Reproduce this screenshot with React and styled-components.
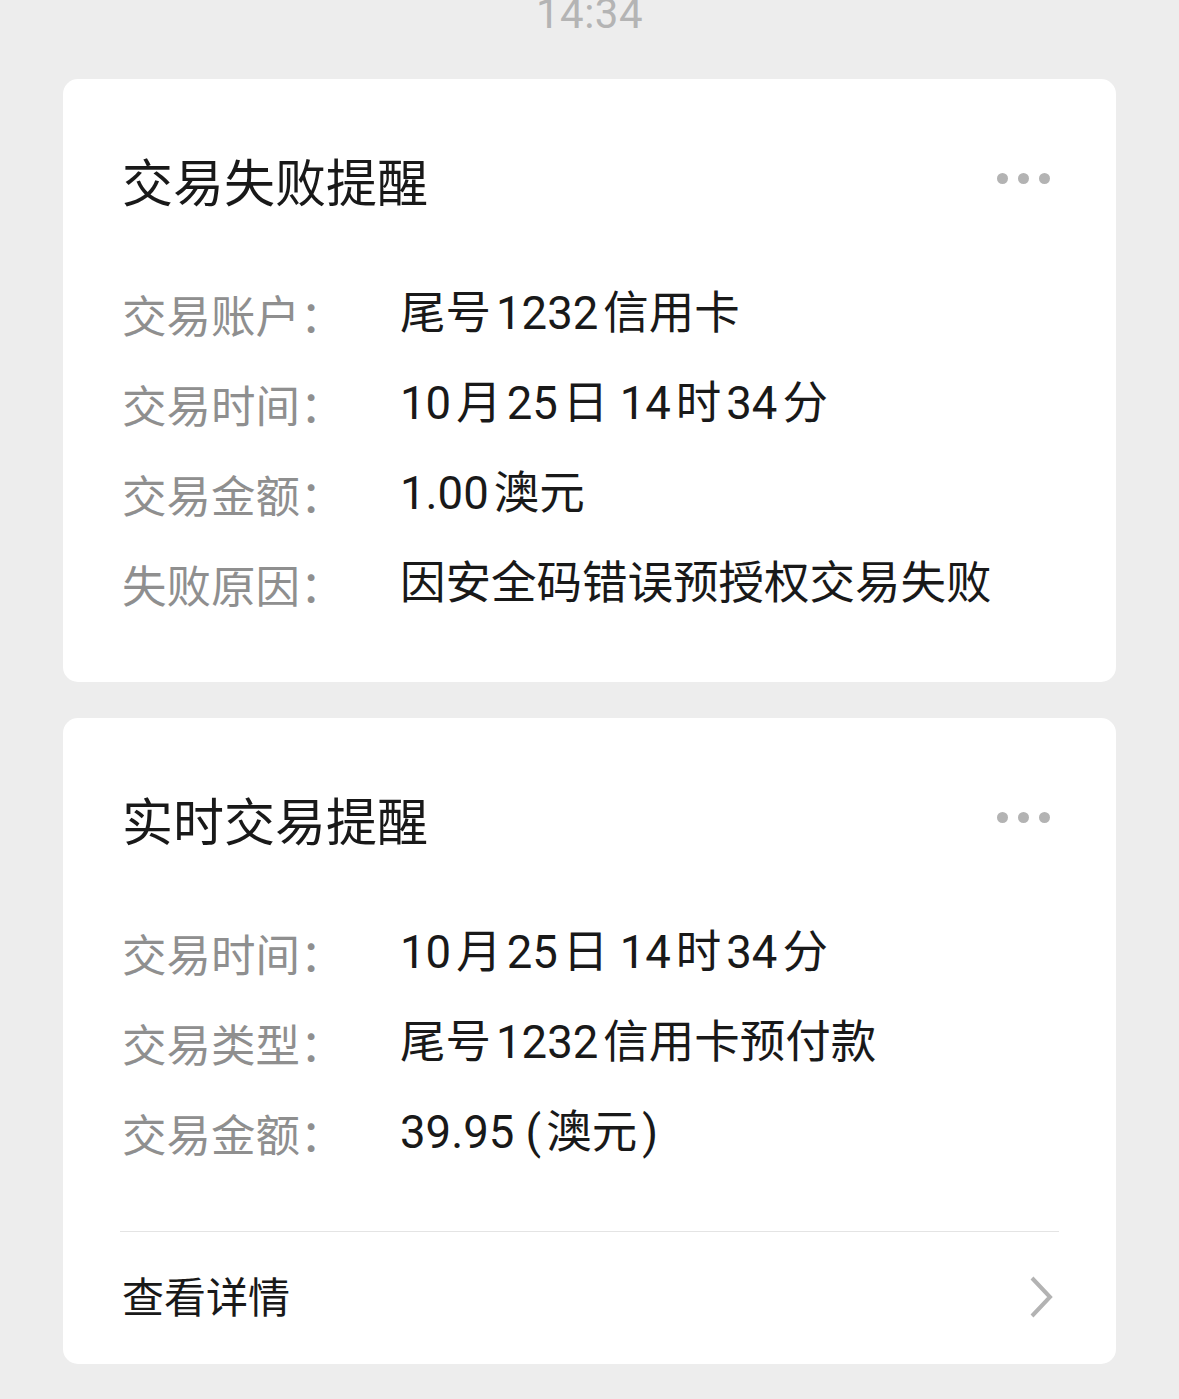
import React from "react";
import styled, { createGlobalStyle } from "styled-components";

const Global = createGlobalStyle`
  html, body { margin: 0; padding: 0; background: #ededed; }
  body { font-family: Roboto, "Noto Sans CJK SC", sans-serif; -webkit-font-smoothing: antialiased; }
`;

const Page = styled.div`
  width: 1179px;
  min-height: 1399px;
  background: #ededed;
  overflow: hidden;
  display: flex;
  flex-direction: column;
  align-items: center;
`;

const TimeStamp = styled.div`
  font-size: 42px;
  line-height: 40px;
  color: #b4b4b4;
  margin-top: -6px;
  height: 40px;
  letter-spacing: 0.5px;
`;

const Cards = styled.div`
  width: 1053px;
  margin-top: 45px;
  display: flex;
  flex-direction: column;
  gap: 36px;
`;

const Card = styled.section`
  background: #fff;
  border-radius: 15px;
  padding: 66px 57px 0 59px;
  display: flex;
  flex-direction: column;
`;

const TitleRow = styled.div`
  display: flex;
  align-items: center;
  justify-content: space-between;
  height: 70px;
  margin-bottom: 54px;
`;

const Title = styled.h2`
  margin: 0;
  font-family: "Noto Sans CJK SC", sans-serif;
  font-weight: 400;
  font-size: 51px;
  line-height: 70px;
  color: #191919;
`;

const Dots = styled.div`
  display: flex;
  gap: 10px;
  margin-right: 9px;
  margin-top: -4px;
`;

const Dot = styled.span`
  width: 11px;
  height: 11px;
  border-radius: 50%;
  background: #b3b3b3;
`;

const Rows = styled.div`
  display: flex;
  flex-direction: column;
  padding-bottom: ${(p) => p.$pb}px;
`;

const Row = styled.div`
  display: flex;
  align-items: center;
  height: 90px;
  line-height: 90px;
`;

const Label = styled.span`
  width: 278px;
  flex: none;
  font-size: 44.5px;
  color: #8f8f8f;
  font-family: "Noto Sans CJK SC", sans-serif;
`;

const Value = styled.span`
  font-size: 45.5px;
  color: #191919;
  white-space: nowrap;
`;

const Latin = styled.span`
  margin-left: ${(p) => (p.$l ? 5 : 0)}px;
  margin-right: ${(p) => (p.$r ? 5 : 0)}px;
  font-family: Roboto, sans-serif;
`;

const Divider = styled.div`
  height: 1px;
  background: #e4e4e4;
  margin-left: -2px;
`;

const Footer = styled.div`
  height: 132px;
  display: flex;
  align-items: center;
  justify-content: space-between;
`;

const FooterText = styled.span`
  font-family: "Noto Sans CJK SC", sans-serif;
  font-size: 42px;
  color: #191919;
  margin-bottom: 7px;
`;

const Chevron = styled.svg`
  width: 24px;
  height: 42px;
  margin-right: 6px;
  margin-bottom: 3px;
`;

function Mixed({ text }) {
  const parts = text.split(/([0-9.:]+)/).filter((s) => s !== "");
  return parts.map((p, i) => {
    if (/^[0-9.:]+$/.test(p)) {
      const prev = parts[i - 1];
      const next = parts[i + 1];
      return (
        <Latin
          key={i}
          $l={prev && /[\u4e00-\u9fff]$/.test(prev)}
          $r={next && /^[\u4e00-\u9fff]/.test(next)}
        >
          {p}
        </Latin>
      );
    }
    if (/[()]/.test(p)) {
      return p
        .split(/([()])/)
        .filter((s) => s !== "")
        .map((q, j) =>
          q === "(" ? (
            <Latin key={i + "-" + j} $r>
              {q}
            </Latin>
          ) : q === ")" ? (
            <Latin key={i + "-" + j} $l>
              {q}
            </Latin>
          ) : (
            <span key={i + "-" + j}>{q}</span>
          )
        );
    }
    return <span key={i}>{p}</span>;
  });
}

const card1 = [
  ["交易账户：", "尾号1232信用卡"],
  ["交易时间：", "10月25日 14时34分"],
  ["交易金额：", "1.00澳元"],
  ["失败原因：", "因安全码错误预授权交易失败"],
];

const card2 = [
  ["交易时间：", "10月25日 14时34分"],
  ["交易类型：", "尾号1232信用卡预付款"],
  ["交易金额：", "39.95 (澳元)"],
];

function MoreDots() {
  return (
    <Dots>
      <Dot />
      <Dot />
      <Dot />
    </Dots>
  );
}

function InfoRows({ rows }) {
  return (
    <Rows $pb={53}>
      {rows.map(([l, v]) => (
        <Row key={l}>
          <Label>{l}</Label>
          <Value>
            <Mixed text={v} />
          </Value>
        </Row>
      ))}
    </Rows>
  );
}

export default function App() {
  return (
    <Page>
      <Global />
      <TimeStamp>14:34</TimeStamp>
      <Cards>
        <Card>
          <TitleRow>
            <Title>交易失败提醒</Title>
            <MoreDots />
          </TitleRow>
          <InfoRows rows={card1} />
        </Card>
        <Card>
          <TitleRow>
            <Title>实时交易提醒</Title>
            <MoreDots />
          </TitleRow>
          <InfoRows rows={card2} />
          <Divider />
          <Footer>
            <FooterText>查看详情</FooterText>
            <Chevron viewBox="0 0 24 42">
              <polyline
                points="3,2 21,21 3,40"
                fill="none"
                stroke="#b3b3b3"
                strokeWidth="4"
                strokeLinecap="butt"
                strokeLinejoin="miter"
              />
            </Chevron>
          </Footer>
        </Card>
      </Cards>
    </Page>
  );
}
